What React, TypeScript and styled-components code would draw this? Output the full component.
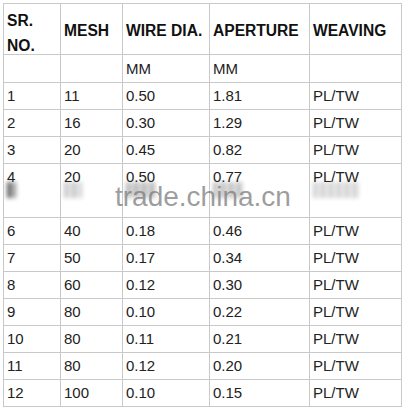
import React from "react";
import styled, { createGlobalStyle } from "styled-components";

const GlobalStyle = createGlobalStyle`
	html, body {
		margin: 0;
		padding: 0;
		background: #ffffff;
	}
	body {
		font-family: "Liberation Sans", Arial, sans-serif;
		color: #1c1c1c;
	}
`;

const Page = styled.div`
	position: relative;
	width: 404px;
	height: 410px;
	padding: 3px 0 0 3px;
	box-sizing: border-box;
	overflow: hidden;
`;

const Grid = styled.div`
	display: grid;
	grid-template-columns: 57px 62px 87px 100px 92px;
	width: 399px;
	border-left: 1px solid #c9c9c9;
	border-top: 1px solid #c9c9c9;
	box-sizing: border-box;
`;

const Cell = styled.div<{ $h?: number; $head?: boolean; $top?: boolean }>`
	box-sizing: border-box;
	height: ${(p) => p.$h ?? 27}px;
	border-right: 1px solid #c9c9c9;
	border-bottom: 1px solid #c9c9c9;
	padding: ${(p) => (p.$top ? "4px" : "0")} 3px 0 3px;
	display: flex;
	flex-direction: column;
	justify-content: ${(p) => (p.$top ? "flex-start" : "center")};
	font-size: ${(p) => (p.$head ? "15.6px" : "15px")};
	font-weight: ${(p) => (p.$head ? 700 : 400)};
	line-height: ${(p) => (p.$head ? "25px" : "18px")};
	color: ${(p) => (p.$head ? "#111" : "#222")};
	white-space: nowrap;
	overflow: hidden;
`;

const HeadText = styled.span`
	padding-top: 3px;
`;

const Smear = styled.div<{ $w: number; $shade: number }>`
	width: ${(p) => p.$w}px;
	height: 16px;
	margin-top: -4px;
	background: repeating-linear-gradient(
		90deg,
		rgba(50, 50, 50, ${(p) => p.$shade}) 0 4px,
		rgba(50, 50, 50, ${(p) => p.$shade * 0.45}) 4px 8px
	);
	filter: blur(2px);
	opacity: 0.9;
`;

const Watermark = styled.div`
	position: absolute;
	left: 115px;
	top: 187px;
	font-family: "Liberation Sans", Arial, sans-serif;
	font-size: 28px;
	line-height: 20px;
	color: rgba(125, 125, 125, 0.75);
	pointer-events: none;
`;

const rows: string[][] = [
	["1", "11", "0.50", "1.81", "PL/TW"],
	["2", "16", "0.30", "1.29", "PL/TW"],
	["3", "20", "0.45", "0.82", "PL/TW"],
	["4", "20", "0.50", "0.77", "PL/TW"],
	["6", "40", "0.18", "0.46", "PL/TW"],
	["7", "50", "0.17", "0.34", "PL/TW"],
	["8", "60", "0.12", "0.30", "PL/TW"],
	["9", "80", "0.10", "0.22", "PL/TW"],
	["10", "80", "0.11", "0.21", "PL/TW"],
	["11", "80", "0.12", "0.20", "PL/TW"],
	["12", "100", "0.10", "0.15", "PL/TW"],
];

const smearShade = [0.85, 0.3, 0.4, 0.35, 0.25];
const smearWidth = [9, 18, 30, 30, 46];

export default function App() {
	return (
		<Page>
			<GlobalStyle />
			<Grid>
				<Cell $h={51} $head $top>
					<span>SR.</span>
					<span>NO.</span>
				</Cell>
				<Cell $h={51} $head>
					<HeadText>MESH</HeadText>
				</Cell>
				<Cell $h={51} $head>
					<HeadText>WIRE DIA.</HeadText>
				</Cell>
				<Cell $h={51} $head>
					<HeadText>APERTURE</HeadText>
				</Cell>
				<Cell $h={51} $head>
					<HeadText>WEAVING</HeadText>
				</Cell>

				<Cell $h={28} />
				<Cell $h={28} />
				<Cell $h={28}>MM</Cell>
				<Cell $h={28}>MM</Cell>
				<Cell $h={28} />

				{rows.map((row) =>
					row.map((v, i) =>
						row[0] === "4" ? (
							<Cell key={row[0] + "-" + i} $h={54} $top>
								<span>{v}</span>
								<Smear $w={smearWidth[i]} $shade={smearShade[i]} />
							</Cell>
						) : (
							<Cell key={row[0] + "-" + i}>{v}</Cell>
						)
					)
				)}
			</Grid>
			<Watermark>trade.china.cn</Watermark>
		</Page>
	);
}
